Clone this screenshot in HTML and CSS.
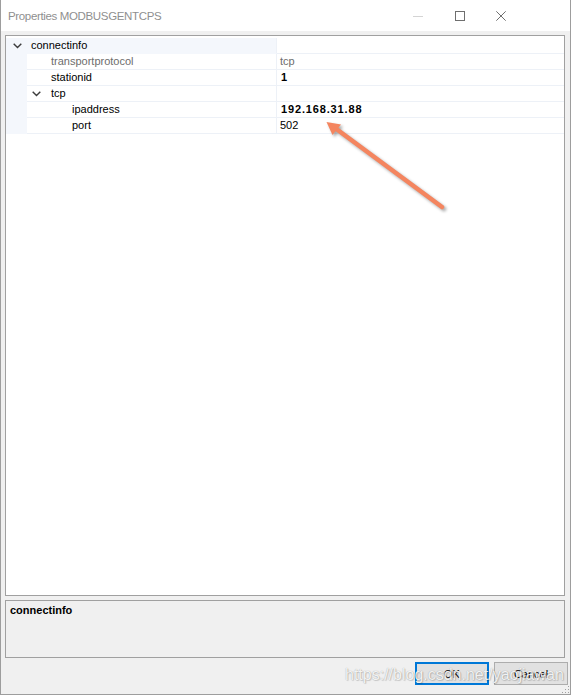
FILE: index.html
```html
<!DOCTYPE html>
<html>
<head>
<meta charset="utf-8">
<title>Properties MODBUSGENTCPS</title>
<link rel="stylesheet" href="styles.css">
</head>
<body>
<div class="window">
  <div class="titlebar">
    <span class="title">Properties MODBUSGENTCPS</span>
    <div class="caption">
      <svg class="cap-btn" width="10" height="10" viewBox="0 0 10 10"><line x1="0" y1="5.5" x2="10" y2="5.5" stroke="#d4d4d4" stroke-width="1"/></svg>
      <svg class="cap-btn" width="10" height="10" viewBox="0 0 10 10"><rect x="0.5" y="0.5" width="9" height="9" fill="none" stroke="#6f6f6f" stroke-width="1"/></svg>
      <svg class="cap-btn" width="10" height="10" viewBox="0 0 10 10"><path d="M0.3 0.3 L9.7 9.7 M9.7 0.3 L0.3 9.7" stroke="#6f6f6f" stroke-width="1"/></svg>
    </div>
  </div>
  <div class="client">
    <div class="grid">
      <div class="row category">
        <div class="gutter"><svg class="chev" width="9" height="6" viewBox="0 0 9 6"><polyline points="0.7,0.7 4.5,4.6 8.3,0.7" fill="none" stroke="#3c3c3c" stroke-width="1.4"/></svg></div>
        <div class="name lvl0">connectinfo</div>
        <div class="value"></div>
      </div>
      <div class="row">
        <div class="gutter"></div>
        <div class="name lvl1 readonly">transportprotocol</div>
        <div class="value readonly">tcp</div>
      </div>
      <div class="row">
        <div class="gutter"></div>
        <div class="name lvl1">stationid</div>
        <div class="value bold">1</div>
      </div>
      <div class="row">
        <div class="gutter"></div>
        <div class="name lvl1x"><svg class="chev" width="9" height="6" viewBox="0 0 9 6"><polyline points="0.7,0.7 4.5,4.6 8.3,0.7" fill="none" stroke="#3c3c3c" stroke-width="1.4"/></svg><span>tcp</span></div>
        <div class="value"></div>
      </div>
      <div class="row">
        <div class="gutter"></div>
        <div class="name lvl2">ipaddress</div>
        <div class="value bold">192.168.31.88</div>
      </div>
      <div class="row">
        <div class="gutter"></div>
        <div class="name lvl2">port</div>
        <div class="value">502</div>
      </div>
    </div>
    <div class="desc">
      <div class="desc-title">connectinfo</div>
    </div>
    <div class="buttons">
      <button class="btn default">OK</button>
      <button class="btn">Cancel</button>
    </div>
  </div>
  <div class="watermark">https://blog.csdn.net/yaojiawan</div>
  <svg class="grip" width="9" height="9" viewBox="0 0 9 9">
    <rect x="7" y="1" width="1" height="1" fill="#a0a0a0"/>
    <rect x="4" y="4" width="1" height="1" fill="#a0a0a0"/>
    <rect x="7" y="4" width="1" height="1" fill="#a0a0a0"/>
    <rect x="1" y="7" width="1" height="1" fill="#a0a0a0"/>
    <rect x="4" y="7" width="1" height="1" fill="#a0a0a0"/>
    <rect x="7" y="7" width="1" height="1" fill="#a0a0a0"/>
  </svg>
  <svg class="arrow" width="571" height="695" viewBox="0 0 571 695">
    <g class="arrow-g">
      <line x1="442" y1="207" x2="335" y2="128" stroke="#f4855f" stroke-width="4.5" stroke-linecap="round"/>
      <polygon points="326.5,122 341,124.5 332.5,135" fill="#f4855f"/>
    </g>
  </svg>
</div>
</body>
</html>
```
FILE: styles.css
```css
* { box-sizing: border-box; }
html, body { margin: 0; padding: 0; }
body {
  width: 571px;
  height: 695px;
  overflow: hidden;
  background: #f0f0f0;
  font-family: "Liberation Sans", Arial, sans-serif;
  font-size: 11px;
  color: #000;
}
.window {
  position: relative;
  width: 571px;
  height: 695px;
  border: 1px solid #9d9d9d;
  border-top: none;
  background: #f0f0f0;
  display: flex;
  flex-direction: column;
}
.titlebar {
  height: 31px;
  flex: none;
  background: #fff;
  display: flex;
  align-items: center;
  justify-content: space-between;
  padding-left: 7px;
}
.title {
  font-size: 11.5px;
  letter-spacing: -0.35px;
  color: #8f8f8f;
  margin-top: 1px;
}
.caption {
  display: flex;
  align-items: center;
  height: 100%;
}
.cap-btn {
  display: block;
  margin-right: 31px;
}
.cap-btn:first-child { margin-right: 32px; }
.cap-btn:last-child { margin-right: 64px; }
.client {
  flex: 1;
  display: flex;
  flex-direction: column;
  padding: 4px 5px 0 4px;
}
.grid {
  height: 561px;
  flex: none;
  border: 1px solid #a0a0a0;
  background: #fff;
  padding-top: 2px;
}
.row {
  display: flex;
  height: 16px;
}
.gutter {
  width: 21px;
  flex: none;
  background: #f4f7fc;
  display: flex;
  align-items: center;
  justify-content: center;
  padding-left: 1px;
}
.name {
  width: 250px;
  flex: none;
  border-bottom: 1px solid #edf1f7;
  border-right: 1px solid #edf1f7;
  line-height: 15px;
  white-space: nowrap;
  display: flex;
  align-items: center;
}
.value {
  flex: 1;
  border-bottom: 1px solid #edf1f7;
  line-height: 15px;
  padding-left: 3px;
  white-space: nowrap;
}
.category .name {
  background: #f4f7fc;
  border-color: #f4f7fc;
  border-right-color: #edf1f7;
}
.lvl0 { padding-left: 4px; }
.lvl1 { padding-left: 24px; }
.lvl1x { padding-left: 5px; }
.lvl1x span { margin-left: 10px; }
.lvl2 { padding-left: 45px; }
.chev { display: block; }
.readonly { color: #6d6d6d; }
.bold { font-weight: bold; letter-spacing: 0.85px; padding-left: 4px; }
.desc {
  margin-top: 4px;
  height: 58px;
  flex: none;
  border: 1px solid #a0a0a0;
  background: #f0f0f0;
  padding: 3px 0 0 4px;
}
.desc-title {
  font-weight: bold;
  line-height: 13px;
}
.buttons {
  margin-top: 4px;
  margin-right: -3px;
  display: flex;
  justify-content: flex-end;
  gap: 5px;
}
.btn {
  width: 74px;
  height: 23px;
  background: #e1e1e1;
  border: 1px solid #adadad;
  font-family: "Liberation Sans", Arial, sans-serif;
  font-size: 11px;
  color: #000;
  padding: 0;
  margin: 0;
}
.btn.default {
  border: 2px solid #0078d7;
}
.watermark {
  position: absolute;
  left: 344px;
  top: 666px;
  font-size: 16px;
  line-height: 18px;
  color: rgba(255, 255, 255, 0.88);
  text-shadow: 0 0 1px rgba(0, 0, 0, 0.35), 1px 1px 1px rgba(0, 0, 0, 0.15);
  white-space: nowrap;
  pointer-events: none;
}
.grip {
  position: absolute;
  right: 0;
  bottom: 0;
}
.arrow {
  position: absolute;
  left: -1px;
  top: 0;
  pointer-events: none;
}
.arrow-g {
  filter: drop-shadow(2px 2px 1.5px rgba(0, 0, 0, 0.35));
}
```
